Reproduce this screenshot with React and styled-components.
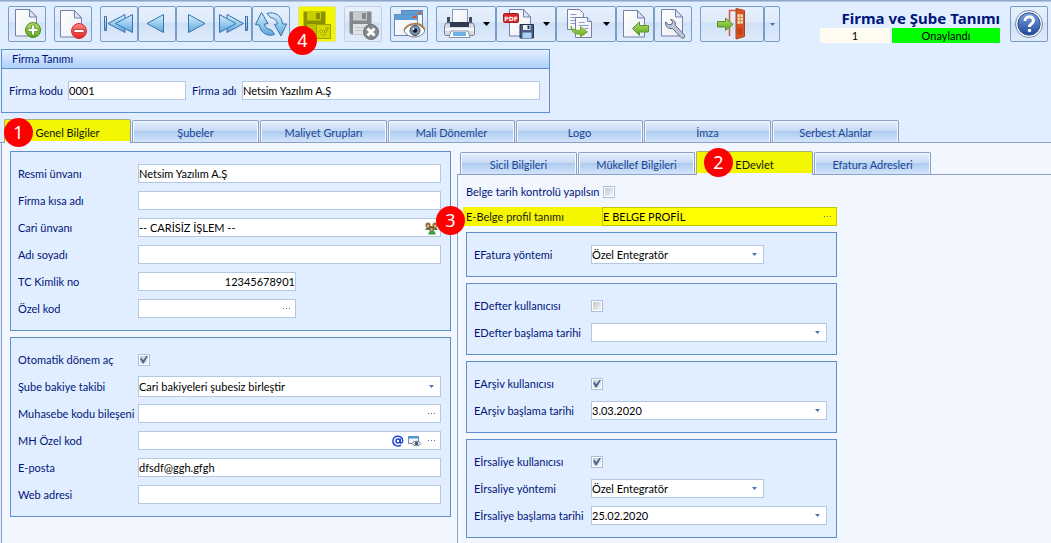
import React, { useId, useState } from "react";
import styled, { createGlobalStyle, css } from "styled-components";

const GlobalStyle = createGlobalStyle`
  * {
    box-sizing: border-box;
  }
  html, body, #root {
    height: 100%;
  }
  body {
    margin: 0;
    background: #e1eeff;
    color: #00157a;
    font-family: Lato, "Liberation Sans", sans-serif;
    font-size: 11px;
    line-height: 14px;
  }
  button, input, select {
    font: inherit;
    margin: 0;
  }
  svg {
    display: block;
  }
`;

const Page = styled.div`
  min-height: 100%;
  display: flex;
  flex-direction: column;
  border-top: 1px solid #8fa6c8;
  box-shadow: inset 0 1px 0 #b4c6df;
`;

const Header = styled.header`
  display: flex;
  align-items: flex-start;
  gap: 8px;
  padding: 5px 3px 6px 8px;
`;

const ButtonGroup = styled.div`
  display: flex;
`;

const ToolButton = styled.button`
  position: relative;
  display: flex;
  align-items: center;
  justify-content: center;
  gap: 8px;
  width: ${(p) => p.$width || 38}px;
  height: 36px;
  padding: 0;
  border: 1px solid ${(p) => (p.disabled ? "#c3d0e4" : "#7a9cc9")};
  border-radius: 2px;
  background: linear-gradient(#e6f0fd 0%, #dfeafa 45%, #cfe0f6 46%, #dfecfd 100%);
  ${(p) =>
    p.$highlight &&
    css`
      background: #f2f600;
      border-color: #e0e48c;
    `}
`;

const HeaderInfo = styled.div`
  margin: 0 2px 0 auto;
  width: 180px;
`;

const Title = styled.h1`
  margin: 0;
  padding-top: 2px;
  font-family: "Noto Sans", "Open Sans", sans-serif;
  font-size: 15px;
  line-height: 20px;
  font-weight: bold;
  text-align: right;
  white-space: nowrap;
`;

const StatusRow = styled.div`
  display: grid;
  grid-template-columns: 70px 1fr;
  gap: 2px;
  color: #000;
  text-align: center;
`;

const Status = styled.span`
  line-height: 15px;
  background: ${(p) => (p.$ok ? "#00ff00" : "#fffbf0")};
`;

const Badge = styled.span`
  position: absolute;
  z-index: 2;
  left: ${(p) => p.$x}px;
  top: ${(p) => p.$y}px;
  width: 29px;
  height: 29px;
  border-radius: 50%;
  background: #ff0000;
  color: #fff;
  font-family: "Noto Sans", sans-serif;
  font-size: 18px;
  line-height: 29px;
  text-align: center;
`;

const CompanyPanel = styled.section`
  width: 549px;
  max-width: 100%;
  margin: 0 0 6px 1px;
  border: 1px solid #5f8fcb;
`;

const PanelHead = styled.h2`
  margin: 0;
  padding: 0 10px;
  border-bottom: 1px solid #5f8fcb;
  background: linear-gradient(#e3efff, #afd0fc);
  font-size: 11px;
  line-height: 18px;
  font-weight: normal;
`;

const CompanyRow = styled.div`
  display: grid;
  grid-template-columns: 59px 118px 56px 1fr;
  align-items: center;
  padding: 12px 9px 12px 7px;
  white-space: nowrap;

  label:nth-of-type(2) {
    padding-left: 6px;
  }
`;

const TabStrip = styled.div`
  display: flex;
  align-items: flex-end;
  gap: 1px;
  height: 24px;
  padding-left: ${(p) => p.$indent}px;
  border-bottom: 1px solid #8b9fc8;
`;

const Tab = styled.button`
  position: relative;
  width: ${(p) => p.$width}px;
  height: 22px;
  padding: 2px 0 0;
  border: 1px solid #8b9fc8;
  border-bottom: 0;
  border-radius: 2px 2px 0 0;
  background: linear-gradient(#e4effd 0%, #c9dcf4 45%, #aecbef 50%, #d3e4fa 100%);
  box-shadow: inset 1px 1px 0 #f3f8ff, inset -1px 0 0 #f3f8ff;
  color: #1a4596;
  ${(p) =>
    p.$active &&
    css`
      height: 24px;
      margin-bottom: -1px;
      border-color: #a9b077 #8b9fc8 #8b9fc8 #a9b077;
      background: linear-gradient(#f2f600, #f2f600) 0 0 / 100% 21px no-repeat #f2f7ff;
      box-shadow: none;
      color: #101800;
    `}
`;

const TabPane = styled.main`
  flex: 1;
  display: flex;
  margin-left: 1px;
  padding-left: 8px;
  gap: 6px;
  border-left: 1px solid #8b9fc8;
  background: #f2f7ff;
`;

const LeftColumn = styled.div`
  flex: 0 1 441px;
  display: flex;
  flex-direction: column;
  gap: 6px;
  padding: 8px 0;
`;

const RightColumn = styled.div`
  flex: 1;
  display: flex;
  flex-direction: column;
  padding-top: 8px;
`;

const InnerPane = styled.div`
  flex: 1;
  display: flex;
  flex-direction: column;
  gap: 6px;
  padding: 5px 8px 4px;
  border-left: 1px solid #8b9fc8;

  > * {
    max-width: 371px;
  }
`;

const Group = styled.section`
  padding: 8px 9px 8px 7px;
  border: 1px solid #5f8fcb;
  background: #e1eeff;
`;

const Row = styled.div`
  display: grid;
  grid-template-columns: ${(p) => p.$label}px 1fr;
  align-items: center;
  height: 27px;
  white-space: nowrap;
`;

const TopRow = styled(Row)`
  height: 24px;
  margin-bottom: -3px;
`;

const ProfileRow = styled(Row)`
  position: relative;
  height: 19px;
  background: #f6f600;
  box-shadow: -3px 0 0 #f6f600;
  color: #1a1a10;
`;

const FieldBox = styled.div`
  position: relative;
  display: flex;
  align-items: center;
  width: ${(p) => (p.$width ? p.$width + "px" : "100%")};
  height: ${(p) => (p.$tall ? 21 : 19)}px;
  border: 1px solid ${(p) => (p.$yellow ? "#c2c600" : "#b4c8e4")};
  background: ${(p) => (p.$yellow ? "#ffff00" : "#fff")};
`;

const TextInput = styled.input`
  flex: 1;
  min-width: 0;
  height: 17px;
  padding: 0;
  border: 0;
  outline: 0;
  background: transparent;
  color: #000;
  text-align: ${(p) => (p.$right ? "right" : "left")};
`;

const SelectInput = styled.select`
  flex: 1;
  min-width: 0;
  height: 17px;
  padding: 0;
  border: 0;
  outline: 0;
  appearance: none;
  background: transparent;
  color: #000;
`;

const FieldButton = styled.button`
  display: flex;
  align-items: center;
  justify-content: center;
  width: 17px;
  height: 17px;
  padding: 0;
  border: 0;
  background: transparent;
`;

const SelectArrow = styled.span`
  position: absolute;
  right: 6px;
  pointer-events: none;
`;

const CheckBox = styled.input`
  appearance: none;
  position: relative;
  width: 12px;
  height: 12px;
  border: 1px solid #a9c0de;
  background: linear-gradient(135deg, #c3c8cf, #f5f5f5) 50% / 8px 8px no-repeat #fff;

  &:checked::after {
    content: "";
    position: absolute;
    inset: 1px;
    background: #43649a;
    clip-path: polygon(0 40%, 20% 30%, 40% 58%, 84% 0, 100% 6%, 46% 100%, 34% 100%);
  }
`;

/* icons */

const Defs = () => (
  <svg width="0" height="0" style={{ position: "absolute" }} aria-hidden="true">
    <defs>
      <linearGradient id="paper" x1="0" y1="0" x2="1" y2="1">
        <stop offset="0" stopColor="#fff" />
        <stop offset="1" stopColor="#eceef4" />
      </linearGradient>
      <linearGradient id="sky" x1="0" y1="0" x2="0" y2="1">
        <stop offset="0" stopColor="#d6f0fc" />
        <stop offset="1" stopColor="#5ba9dc" />
      </linearGradient>
      <linearGradient id="green" x1="0" y1="0" x2="0" y2="1">
        <stop offset="0" stopColor="#b4e06a" />
        <stop offset="1" stopColor="#5ea61c" />
      </linearGradient>
      <linearGradient id="red" x1="0" y1="0" x2="0" y2="1">
        <stop offset="0" stopColor="#ff8a86" />
        <stop offset="1" stopColor="#e2201f" />
      </linearGradient>
      <linearGradient id="navy" x1="0" y1="0" x2="0" y2="1">
        <stop offset="0" stopColor="#7ba0dc" />
        <stop offset="1" stopColor="#1e4a9c" />
      </linearGradient>
    </defs>
  </svg>
);

const Icon = ({ children, size = 32 }) => (
  <svg width={size} height={size} viewBox="0 0 32 32" aria-hidden="true">
    {children}
  </svg>
);

const Sheet = ({ x = 4, y = 1 }) => (
  <g transform={`translate(${x} ${y})`} stroke="#7480ad" strokeLinejoin="round">
    <path d="M.5 .5h14l7 7.5v19h-21z" fill="url(#paper)" />
    <path d="M14.5 .5v7.5h7z" fill="#dfe6f5" />
  </g>
);

const NewIcon = () => (
  <Icon>
    <Sheet />
    <circle cx="22" cy="22" r="7.5" fill="url(#green)" stroke="#4b8a1a" />
    <path d="M20.5 17h3v3.5h3.5v3h-3.5v3.5h-3v-3.5h-3.5v-3h3.5z" fill="#fff" stroke="#4b8a1a" strokeWidth=".7" />
  </Icon>
);

const DeleteIcon = () => (
  <Icon>
    <Sheet x={3} y={2} />
    <circle cx="22" cy="23" r="7.5" fill="url(#red)" stroke="#d2312f" />
    <rect x="17" y="21.5" width="10" height="3" fill="#fff" stroke="#a51f1f" strokeWidth=".7" />
  </Icon>
);

const arrowPaint = { fill: "url(#sky)", stroke: "#3a6fb0", strokeLinejoin: "round" };

const FirstIcon = () => (
  <Icon>
    <rect x="1.5" y="8.5" width="2" height="14" {...arrowPaint} />
    <path d="M22 6.5v18L5 15.5z" {...arrowPaint} />
    <path d="M29.5 6.5v18L12.5 15.5z" {...arrowPaint} />
  </Icon>
);

const PrevIcon = () => (
  <Icon>
    <path d="M22.5 6.5v18L6 15.5z" {...arrowPaint} />
  </Icon>
);

const NextIcon = () => (
  <Icon>
    <path d="M9.5 6.5v18L26 15.5z" {...arrowPaint} />
  </Icon>
);

const LastIcon = () => (
  <Icon>
    <path d="M10 6.5v18L26.5 15.5z" {...arrowPaint} />
    <path d="M2.5 6.5v18L19 15.5z" {...arrowPaint} />
    <rect x="28.5" y="8.5" width="2" height="14" {...arrowPaint} />
  </Icon>
);

const RefreshIcon = () => (
  <Icon>
    <path d="M.5 16.500 6.500 4.500l6.500 11-3.500 .5c.5 3 3 5.500 7 6l3 4.500c-7 2.500-14.500-2-15-9.500z" {...arrowPaint} />
    <path d="M31.500 16 26 28l-6.500-11.500 3-.5c-.5-3.500-3-6-7-6.500l-3.500-4c7-2.500 15 2 15.500 10.500z" {...arrowPaint} />
  </Icon>
);

const Floppy = ({ dark, mid, light }) => (
  <g>
    <path d="M2.5 3.5h22v23h-20l-2-2z" fill={dark} />
    <rect x="6" y="3.5" width="14" height="9" fill={mid} />
    <rect x="15" y="5" width="4" height="6" fill={dark} />
    <rect x="6" y="16" width="15" height="10.5" fill={light} />
    <path d="M8 19.5h11M8 22.5h11" stroke={mid} />
  </g>
);

const SaveIcon = () => (
  <Icon>
    <Floppy dark="#8b9000" mid="#c9cd00" light="#b6bb00" />
    <rect x="15.5" y="16.5" width="14" height="14" fill="#d3d800" stroke="#9aa000" />
    <path d="M18.5 23.5l2-1.5 2 3 4-6 1 1-5 8z" fill="#eaf000" stroke="#868c00" strokeWidth=".8" />
  </Icon>
);

const SaveCancelIcon = () => (
  <Icon>
    <Floppy dark="#85888d" mid="#c6c9cd" light="#dfe1e4" />
    <circle cx="24" cy="24" r="7.5" fill="#85888b" stroke="#6d7073" />
    <path d="M20.5 20.5l7 7m0-7l-7 7" stroke="#fff" strokeWidth="3" />
  </Icon>
);

const PreviewIcon = () => (
  <Icon>
    <rect x="8.5" y="2.5" width="21" height="16" fill="#f6f8fc" stroke="#5b86bd" />
    <rect x="9" y="3" width="20" height="4" fill="#5b9fd8" />
    <rect x="25" y="4" width="3" height="2" fill="#e8502c" />
    <rect x="1.5" y="6.5" width="23" height="21" fill="url(#paper)" stroke="#6b8ab8" />
    <rect x="2" y="7" width="22" height="5" fill="#5b9fd8" />
    <rect x="20" y="8" width="3" height="2" fill="#e8502c" />
    <path d="M11 23c4-8 17-9 21 0-4 8-17 8-21 0z" fill="#fff" stroke="#777a85" />
    <path d="M11 22c4-8 17-9 21 0" fill="none" stroke="#b7743c" strokeWidth="1.5" />
    <circle cx="22" cy="22.5" r="5" fill="#7b93b2" stroke="#3b4d69" />
    <circle cx="22" cy="22.5" r="2.2" fill="#101820" />
    <circle cx="20.5" cy="21" r="1" fill="#fff" />
  </Icon>
);

const PrintIcon = () => (
  <Icon>
    <rect x="4" y="9" width="3" height="10" fill="#3f4a60" />
    <rect x="26" y="9" width="3" height="10" fill="#3f4a60" />
    <path d="M9.5 1.5h15v14h-15z" fill="url(#paper)" stroke="#8c94b5" />
    <path d="M3 15h27l1.5 3v8l-1 1.5H2.5L1.5 26v-8z" fill="#d8dce6" stroke="#7a8196" />
    <path d="M7 14h19v5H7z" fill="#2e3a52" />
    <path d="M2 20h29v3H2z" fill="#f4f5f8" />
    <path d="M8 23h17l2 6.5H6z" fill="#fff" stroke="#8790a8" />
    <path d="M10 24h13v4H10z" fill="#6eb1e6" />
  </Icon>
);

const PdfIcon = () => (
  <Icon>
    <Sheet x={6} y={1} />
    <rect x=".5" y="5.5" width="15" height="9" rx="1" fill="#d32a2c" stroke="#a51d20" />
    <text x="8" y="12.5" textAnchor="middle" fontFamily="DejaVu Sans" fontWeight="bold" fontSize="6" fill="#fff">
      PDF
    </text>
    <path d="M17 16.5h13.5v13.5H17z" fill="#475b85" stroke="#26324f" />
    <rect x="20" y="17" width="7.5" height="5" fill="#e8edf5" />
    <rect x="24.5" y="17.5" width="2" height="3.5" fill="#26324f" />
    <rect x="19.5" y="24.5" width="9" height="5.5" fill="#a8d3f5" />
  </Icon>
);

const CopyIcon = () => (
  <Icon>
    <path d="M4.5 1.5h12l4 4v16h-16z" fill="url(#paper)" stroke="#7480ad" />
    <path d="M7.5 6.5h6M7.5 9.5h9M7.5 12.5h9M7.5 15.5h6" stroke="#8f9cc4" />
    <path d="M12.5 9.5h12l4 4v16h-16z" fill="url(#paper)" stroke="#7480ad" />
    <path d="M24.5 9.5v4h4" fill="#dfe6f5" stroke="#7480ad" />
    <path d="M15.5 14.5h6M15.5 17.5h10M21.5 20.5h4" stroke="#8f9cc4" />
    <path d="M8 18c1 4 5 5 9.5 4v-3.5l7 5.5-7 5v-3C12 27 8 24 8 18z" fill="url(#green)" stroke="#6c9a1c" strokeWidth=".8" />
  </Icon>
);

const ImportIcon = () => (
  <Icon>
    <Sheet x={4} y={2} />
    <path d="M13.5 20.5l7-6.5v3.5h9v6.5h-9v3.5z" fill="url(#green)" stroke="#58932a" />
  </Icon>
);

const ToolsIcon = () => (
  <Icon>
    <Sheet x={4} y={1} />
    <path
      d="M13.5 11.500c3 0 5.500 2.500 5 6l8.500 9c2 2.500-.5 5-3 3l-8.500-9c-4 1-7.500-2-7-6.500l3.500 3 3-1 .5-2.500z"
      fill="#bcc6d6"
      stroke="#586880"
      strokeLinejoin="round"
    />
  </Icon>
);

const ExitIcon = () => (
  <Icon>
    <path d="M13.5 28V2.5H22" fill="none" stroke="#d4593a" strokeWidth="1.5" />
    <path d="M20 .5l8.500 2v26L20 31z" fill="#d65328" stroke="#b43e1a" />
    <path d="M21.5 6l5.5 .5v9L21.5 16z" fill="#f5dfb8" />
    <path d="M24.2 6v10M21.5 9.5h5.5M21.5 12.5h5.5" stroke="#c0814f" strokeWidth=".8" />
    <path d="M21.5 20h5v6l-5 1z" fill="#c14318" />
    <path d="M1.5 13.5h8V10l7.5 6.5-7.5 6V19h-8z" fill="url(#green)" stroke="#58932a" />
  </Icon>
);

const HelpIcon = () => (
  <Icon>
    <circle cx="16" cy="16" r="13.5" fill="#fff" stroke="#7386a8" />
    <circle cx="16" cy="16" r="11.2" fill="url(#navy)" stroke="#2d5294" />
    <path d="M12 13c0-5.5 8.500-5.500 8.500-.5 0 3.500-4 3-4 6.500" fill="none" stroke="#fff" strokeWidth="3" />
    <circle cx="16.5" cy="22.5" r="1.8" fill="#fff" />
  </Icon>
);

const Caret = ({ color = "#000", small }) => (
  <svg width={small ? 5 : 7} height={small ? 3 : 4} viewBox="0 0 7 4" aria-hidden="true">
    <path d="M0 0h7L3.5 4z" fill={color} />
  </svg>
);

const Dots = () => (
  <svg width="9" height="3" viewBox="0 0 9 3" aria-hidden="true">
    <path d="M1 1h1v1H1zM4 1h1v1H4zM7 1h1v1H7z" fill="#4a6ea5" />
  </svg>
);

const PeopleIcon = () => (
  <svg width="15" height="14" viewBox="0 0 15 14" aria-hidden="true">
    <path d="M1 9l2-3h3l2 3zM7 9l2-3h3l2 3z" fill="#4d8a3a" />
    <path d="M4 13.5l2-4h4l2 4z" fill="#3f9a45" />
    <circle cx="4" cy="4" r="2.6" fill="#9a6a35" />
    <circle cx="11" cy="4" r="2.6" fill="#9a6a35" />
    <circle cx="7.5" cy="7.5" r="2.6" fill="#7d5230" />
    <circle cx="4" cy="5" r="1.2" fill="#e3b98a" />
    <circle cx="11" cy="5" r="1.2" fill="#e3b98a" />
    <circle cx="7.5" cy="8.5" r="1.2" fill="#e3b98a" />
  </svg>
);

const AtIcon = () => (
  <svg width="12" height="12" viewBox="0 0 12 12" fill="none" stroke="#2346d6" strokeWidth="1.5" aria-hidden="true">
    <circle cx="6" cy="6" r="2" />
    <path d="M8.2 3.5v3.500c0 1.500 2.500 1.500 2.500-1 0-6.500-9.500-6.500-9.800 0 0 5 5 5.800 8.100 4.300" />
  </svg>
);

const LookupIcon = () => (
  <svg width="13" height="12" viewBox="0 0 13 12" aria-hidden="true">
    <path d="M.5 1.5h10v7H.5z" fill="#f4f7fc" stroke="#6f8fbd" />
    <path d="M0 1h11v2.5H0z" fill="#4f93d0" />
    <path d="M4 8.5c2-3 7-3 9 0-2 3-7 3-9 0z" fill="#fff" stroke="#6a7486" />
    <circle cx="8.5" cy="8.5" r="1.8" fill="#3f5272" />
  </svg>
);

/* form parts */

const TextRow = ({ label, column, value = "", width, right, children }) => {
  const id = useId();
  const [text, setText] = useState(value);
  return (
    <Row $label={column}>
      <label htmlFor={id}>{label}</label>
      <FieldBox $width={width}>
        <TextInput id={id} value={text} $right={right} onChange={(e) => setText(e.target.value)} />
        {children}
      </FieldBox>
    </Row>
  );
};

const SelectRow = ({ label, column, value, width, tall }) => {
  const id = useId();
  return (
    <Row $label={column}>
      <label htmlFor={id}>{label}</label>
      <FieldBox $width={width} $tall={tall}>
        <SelectInput id={id} defaultValue={value}>
          <option>{value}</option>
        </SelectInput>
        <SelectArrow>
          <Caret color="#4a74b0" small />
        </SelectArrow>
      </FieldBox>
    </Row>
  );
};

const CheckRow = ({ label, column, checked, rowType: RowType = Row }) => {
  const id = useId();
  return (
    <RowType $label={column}>
      <label htmlFor={id}>{label}</label>
      <CheckBox id={id} type="checkbox" defaultChecked={checked} />
    </RowType>
  );
};

const DotsButton = () => (
  <FieldButton type="button" aria-label="Seç">
    <Dots />
  </FieldButton>
);

const DateButton = () => (
  <FieldButton type="button" aria-label="Takvim">
    <Caret color="#4a74b0" small />
  </FieldButton>
);

const navigation = [
  ["İlk", FirstIcon],
  ["Önceki", PrevIcon],
  ["Sonraki", NextIcon],
  ["Son", LastIcon],
  ["Yenile", RefreshIcon],
];

const outputs = [
  ["Yazdır", PrintIcon],
  ["PDF kaydet", PdfIcon],
  ["Kopyala", CopyIcon],
];

const mainTabs = ["Genel Bilgiler", "Şubeler", "Maliyet Grupları", "Mali Dönemler", "Logo", "İmza", "Serbest Alanlar"];
const innerTabs = ["Sicil Bilgileri", "Mükellef Bilgileri", "EDevlet", "Efatura Adresleri"];

const Toolbar = () => (
  <Header>
    <ToolButton aria-label="Yeni"><NewIcon /></ToolButton>
    <ToolButton aria-label="Sil"><DeleteIcon /></ToolButton>
    <ButtonGroup>
      {navigation.map(([name, Glyph]) => (
        <ToolButton key={name} aria-label={name}><Glyph /></ToolButton>
      ))}
    </ButtonGroup>
    <ToolButton aria-label="Kaydet" $highlight>
      <SaveIcon />
      <Badge $x={-11} $y={19}>4</Badge>
    </ToolButton>
    <ToolButton aria-label="Vazgeç" disabled><SaveCancelIcon /></ToolButton>
    <ToolButton aria-label="Önizle"><PreviewIcon /></ToolButton>
    <ButtonGroup>
      {outputs.map(([name, Glyph]) => (
        <ToolButton key={name} aria-label={name} $width={60}>
          <Glyph />
          <Caret />
        </ToolButton>
      ))}
      <ToolButton aria-label="İçe aktar"><ImportIcon /></ToolButton>
      <ToolButton aria-label="Ayarlar"><ToolsIcon /></ToolButton>
    </ButtonGroup>
    <ButtonGroup>
      <ToolButton aria-label="Çıkış" $width={64}><ExitIcon /></ToolButton>
      <ToolButton aria-label="Çıkış seçenekleri" $width={16}>
        <Caret color="#4a74b0" small />
      </ToolButton>
    </ButtonGroup>
    <HeaderInfo>
      <Title>Firma ve Şube Tanımı</Title>
      <StatusRow>
        <Status>1</Status>
        <Status $ok>Onaylandı</Status>
      </StatusRow>
    </HeaderInfo>
    <ToolButton aria-label="Yardım"><HelpIcon /></ToolButton>
  </Header>
);

const App = () => (
  <Page>
    <GlobalStyle />
    <Defs />
    <Toolbar />

    <CompanyPanel>
      <PanelHead>Firma Tanımı</PanelHead>
      <CompanyRow>
        <label htmlFor="code">Firma kodu</label>
        <FieldBox><TextInput id="code" defaultValue="0001" /></FieldBox>
        <label htmlFor="name">Firma adı</label>
        <FieldBox><TextInput id="name" defaultValue="Netsim Yazılım A.Ş" /></FieldBox>
      </CompanyRow>
    </CompanyPanel>

    <TabStrip $indent={4}>
      {mainTabs.map((name, i) => (
        <Tab key={name} $width={127} $active={i === 0}>
          {i === 0 && <Badge $x={-1} $y={-2}>1</Badge>}
          {name}
        </Tab>
      ))}
    </TabStrip>

    <TabPane>
      <LeftColumn>
        <Group>
          <TextRow column={120} label="Resmi ünvanı" value="Netsim Yazılım A.Ş" />
          <TextRow column={120} label="Firma kısa adı" />
          <TextRow column={120} label="Cari ünvanı" value="-- CARİSİZ İŞLEM --">
            <FieldButton type="button" aria-label="Cari seç"><PeopleIcon /></FieldButton>
          </TextRow>
          <TextRow column={120} label="Adı soyadı" />
          <TextRow column={120} label="TC Kimlik no" value="12345678901" width={158} right />
          <TextRow column={120} label="Özel kod" width={158}><DotsButton /></TextRow>
        </Group>
        <Group>
          <CheckRow column={120} label="Otomatik dönem aç" checked />
          <SelectRow column={120} label="Şube bakiye takibi" value="Cari bakiyeleri şubesiz birleştir" tall />
          <TextRow column={120} label="Muhasebe kodu bileşeni"><DotsButton /></TextRow>
          <TextRow column={120} label="MH Özel kod">
            <FieldButton type="button" aria-label="E-posta"><AtIcon /></FieldButton>
            <FieldButton type="button" aria-label="Göster"><LookupIcon /></FieldButton>
            <DotsButton />
          </TextRow>
          <TextRow column={120} label="E-posta" value="dfsdf@ggh.gfgh" />
          <TextRow column={120} label="Web adresi" />
        </Group>
      </LeftColumn>

      <RightColumn>
        <TabStrip $indent={3}>
          {innerTabs.map((name, i) => (
            <Tab key={name} $width={117} $active={i === 2}>
              {i === 2 && <Badge $x={7} $y={-4}>2</Badge>}
              {name}
            </Tab>
          ))}
        </TabStrip>
        <InnerPane>
          <CheckRow rowType={TopRow} column={137} label="Belge tarih kontrolü yapılsın" />
          <ProfileRow $label={136}>
            <Badge $x={-30} $y={-1}>3</Badge>
            <label htmlFor="profile">E-Belge profil tanımı</label>
            <FieldBox $yellow>
              <TextInput id="profile" defaultValue="E BELGE PROFİL" />
              <DotsButton />
            </FieldBox>
          </ProfileRow>
          <Group>
            <SelectRow column={117} label="EFatura yöntemi" value="Özel Entegratör" width={173} />
          </Group>
          <Group>
            <CheckRow column={117} label="EDefter kullanıcısı" />
            <TextRow column={117} label="EDefter başlama tarihi"><DateButton /></TextRow>
          </Group>
          <Group>
            <CheckRow column={117} label="EArşiv kullanıcısı" checked />
            <TextRow column={117} label="EArşiv başlama tarihi" value="3.03.2020"><DateButton /></TextRow>
          </Group>
          <Group>
            <CheckRow column={117} label="Eİrsaliye kullanıcısı" checked />
            <SelectRow column={117} label="Eİrsaliye yöntemi" value="Özel Entegratör" width={173} />
            <TextRow column={117} label="Eİrsaliye başlama tarihi" value="25.02.2020"><DateButton /></TextRow>
          </Group>
        </InnerPane>
      </RightColumn>
    </TabPane>
  </Page>
);

export default App;
